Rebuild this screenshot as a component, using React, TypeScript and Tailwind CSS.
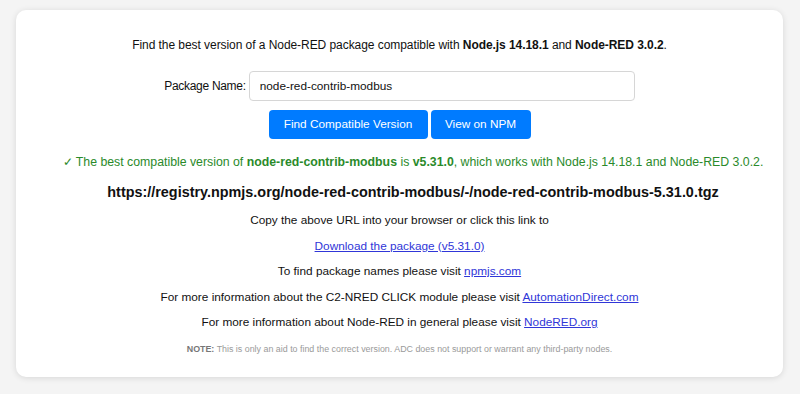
import React from 'react';

const links = [
  { pre: 'To find package names please visit ', label: 'npmjs.com' },
  { pre: 'For more information about the C2-NRED CLICK module please visit ', label: 'AutomationDirect.com' },
  { pre: 'For more information about Node-RED in general please visit ', label: 'NodeRED.org' },
];

export default function App() {
  return (
    <div className="min-h-screen bg-[#f4f4f4] px-4 pt-[10px] font-['Liberation_Sans',Arial,sans-serif]">
      <div className="bg-white rounded-[10px] shadow-[0_1px_6px_rgba(0,0,0,0.12)] h-[367px] w-[767px] flex flex-col items-center pt-[26px] text-center text-[#111]">
        <p className="text-[12px] leading-[18px] tracking-[-0.06px]">
          Find the best version of a Node-RED package compatible with <b>Node.js 14.18.1</b> and <b>Node-RED 3.0.2</b>.
        </p>

        <div className="flex items-center mt-[17px]">
          <label className="text-[12px] tracking-[-0.3px] mr-[3px]">Package Name:</label>
          <input
            readOnly
            value="node-red-contrib-modbus"
            className="w-[386px] h-[30px] border border-[#d6d6d6] rounded-[4px] pl-[10px] text-[11.8px] text-[#111] outline-none"
          />
        </div>

        <div className="flex gap-[3px] mt-[9px]">
          <button className="h-[29px] w-[159px] bg-[#007bff] text-white text-[11.8px] rounded-[4px]">
            Find Compatible Version
          </button>
          <button className="h-[29px] w-[100px] bg-[#007bff] text-white text-[11.8px] rounded-[4px]">
            View on NPM
          </button>
        </div>

        <div className="flex flex-col items-center pl-[27px] mt-[14px]">
          <p className="text-[12.3px] leading-[18px] text-[#2a8a2a]">
            ✓ The best compatible version of <b>node-red-contrib-modbus</b> is <b>v5.31.0</b>, which works with Node.js 14.18.1 and Node-RED 3.0.2.
          </p>
          <p className="text-[14.4px] leading-[20px] font-bold mt-[11px]">
            https://registry.npmjs.org/node-red-contrib-modbus/-/node-red-contrib-modbus-5.31.0.tgz
          </p>
        </div>

        <div className="flex flex-col items-center mt-[9px] text-[11.8px] leading-[18px] gap-[7.5px]">
          <p>Copy the above URL into your browser or click this link to</p>
          <a href="#" className="text-[#3036d8] underline">Download the package (v5.31.0)</a>
          {links.map((l) => (
            <p key={l.label}>
              {l.pre}
              <a href="#" className="text-[#3036d8] underline">{l.label}</a>
            </p>
          ))}
        </div>

        <p className="text-[8.9px] leading-[12px] mt-[12px] text-[#9a9a9a]">
          <b className="text-[#777]">NOTE:</b> This is only an aid to find the correct version. ADC does not support or warrant any third-party nodes.
        </p>
      </div>
    </div>
  );
}
